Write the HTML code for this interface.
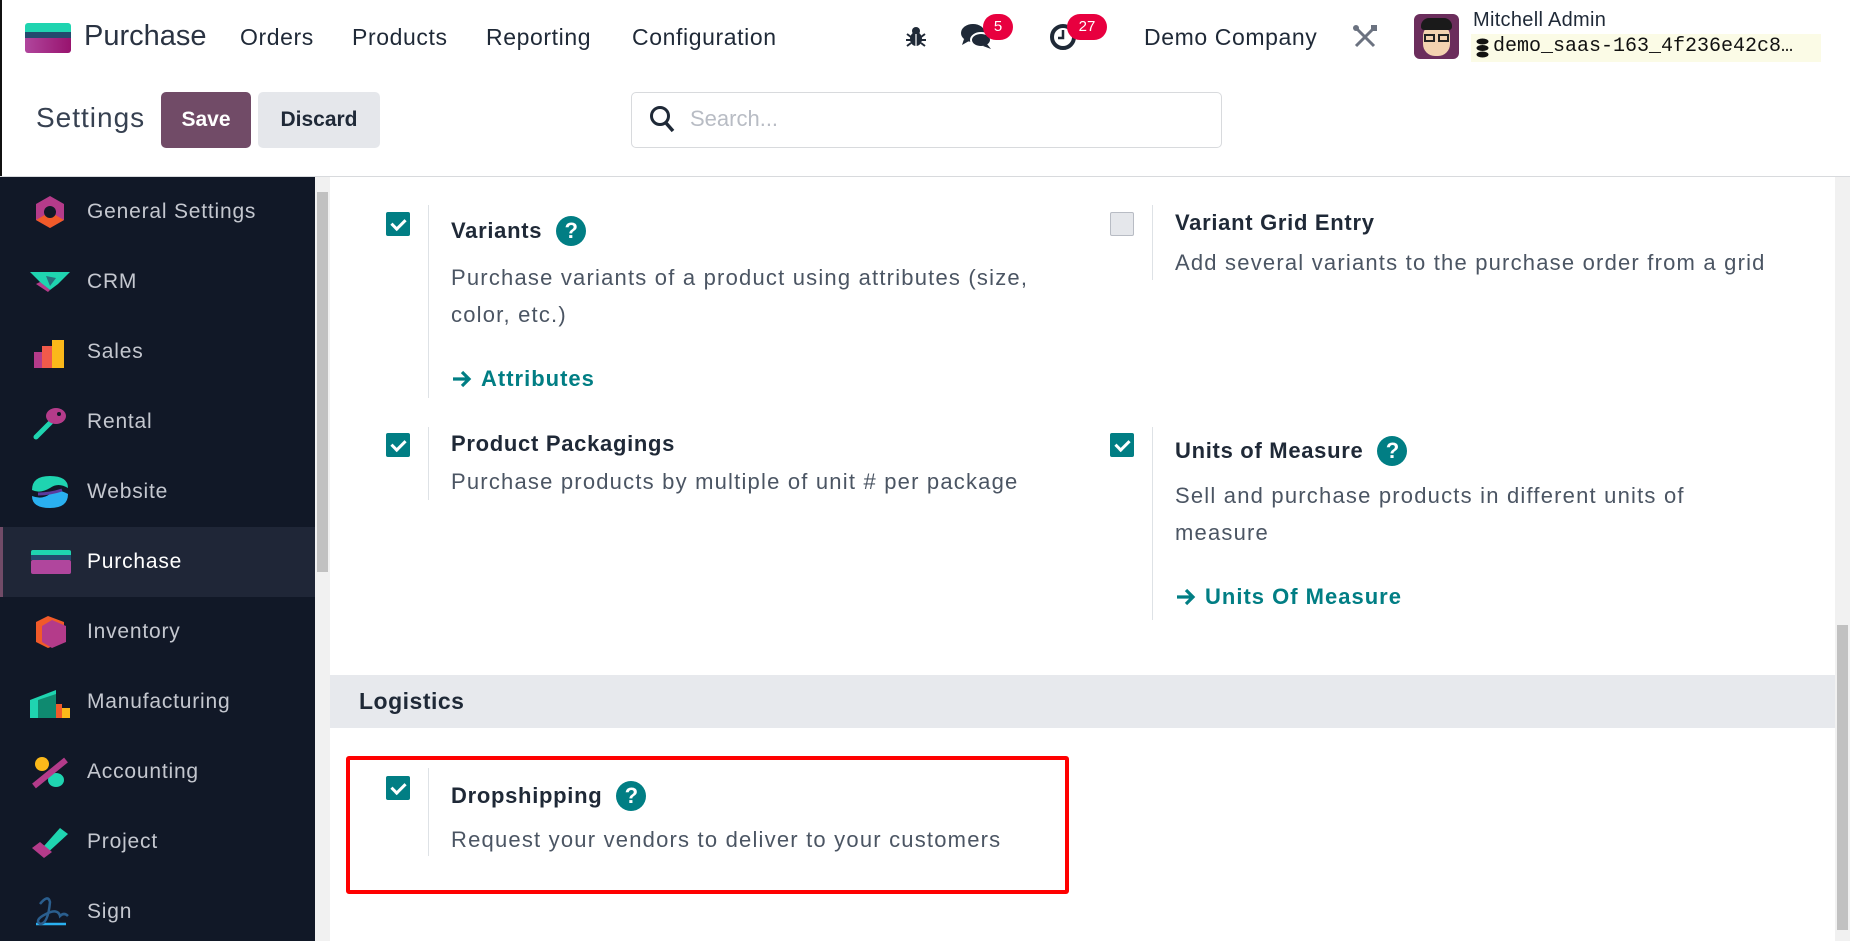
<!DOCTYPE html>
<html><head><meta charset="utf-8"><style>
*{box-sizing:border-box;margin:0;padding:0}
body{width:1850px;height:941px;overflow:hidden;background:#fff;font-family:"Liberation Sans",sans-serif;position:relative;color:#1f2937}
.abs{position:absolute}
.nav{font-size:23px;color:#1f2937;top:24px;letter-spacing:0.6px}
.side{left:0;top:177px;width:315px;height:764px;background:#111827}
.item{position:absolute;left:0;width:315px;height:70px;display:flex;align-items:center;font-size:21px;color:#c4c7cf;letter-spacing:0.8px}
.item .ic{position:absolute;left:28px;top:17px;width:44px;height:36px}
.item span{position:absolute;left:87px}
.cb{position:absolute;width:24px;height:24px;background:#017e84;border-radius:2px}
.cb::after{content:"";position:absolute;left:8px;top:4px;width:6px;height:11px;border:solid #fff;border-width:0 3px 3px 0;transform:rotate(45deg)}
.cb.off{background:#e5e7eb;border:1px solid #b8bcc4}
.cb.off::after{display:none}
.vl{position:absolute;width:1px;background:#dee2e6}
.t{position:absolute;font-size:22px;font-weight:bold;color:#1f2937;white-space:nowrap;letter-spacing:0.7px;display:flex;align-items:center}
.d{position:absolute;font-size:22px;color:#4b5563;line-height:37px;white-space:nowrap;letter-spacing:1.2px}
.lk{position:absolute;font-size:22px;font-weight:bold;color:#017e84;white-space:nowrap;letter-spacing:1px;display:flex;align-items:center}
.lk svg{margin-right:8px}
.q{display:inline-block;width:30px;height:30px;border-radius:50%;background:#017e84;color:#fff;font-size:22px;text-align:center;line-height:30px;margin-left:14px;letter-spacing:0}
.badge{position:absolute;background:#e8003f;color:#fff;border-radius:14px;font-size:15px;text-align:center;height:26px;line-height:26px}
</style></head><body>
<div class="abs" style="left:0;top:0;width:2px;height:177px;background:#111"></div>
<div class="abs" style="left:25px;top:23px;width:46px;height:30px;border-radius:3px;overflow:hidden">
 <div style="height:9px;background:#1fd4b0"></div><div style="height:6px;background:#234a6e"></div><div style="height:15px;background:linear-gradient(90deg,#b0469d,#98136e)"></div></div>
<div class="abs nav" style="left:84px;top:20px;font-size:29px;color:#2a3342;letter-spacing:0">Purchase</div>
<div class="abs nav" style="left:240px">Orders</div>
<div class="abs nav" style="left:352px">Products</div>
<div class="abs nav" style="left:486px">Reporting</div>
<div class="abs nav" style="left:632px">Configuration</div>
<svg class="abs" style="left:904px;top:25px" width="24" height="24" viewBox="0 0 24 24"><ellipse cx="12" cy="14" rx="6" ry="7" fill="#1f2937"/><circle cx="12" cy="6" r="4" fill="#1f2937"/><path d="M3 9l4 3M21 9l-4 3M2 15h5M22 15h-5M3 21l4-3M21 21l-4-3" stroke="#1f2937" stroke-width="2"/><path d="M12 9v12" stroke="#fff" stroke-width="1.2"/></svg>
<svg class="abs" style="left:960px;top:22px" width="36" height="30" viewBox="0 0 36 30"><ellipse cx="13" cy="11" rx="12" ry="9" fill="#1f2937"/><path d="M4 17l-2 6 7-4z" fill="#1f2937"/><ellipse cx="21" cy="18" rx="10" ry="7" fill="#1f2937" stroke="#fff" stroke-width="2"/><path d="M27 22l4 5-8-3z" fill="#1f2937"/></svg>
<div class="badge" style="left:983px;top:14px;width:30px">5</div>
<svg class="abs" style="left:1048px;top:22px" width="30" height="30" viewBox="0 0 30 30"><circle cx="15" cy="15" r="11" fill="none" stroke="#1f2937" stroke-width="4"/><path d="M15 8v8h-5" stroke="#1f2937" stroke-width="2.5" fill="none"/></svg>
<div class="badge" style="left:1067px;top:14px;width:40px">27</div>
<div class="abs nav" style="left:1144px">Demo Company</div>
<svg class="abs" style="left:1352px;top:24px" width="26" height="26" viewBox="0 0 26 26"><path d="M4 4l18 18M22 4L4 22" stroke="#6b7280" stroke-width="3"/><circle cx="4" cy="4" r="3" fill="#6b7280"/><rect x="19" y="1" width="6" height="6" fill="#6b7280"/></svg>
<div class="abs" style="left:1414px;top:14px;width:45px;height:45px;border-radius:6px;background:#6b2d5c;overflow:hidden">
 <div style="position:absolute;left:9px;top:10px;width:27px;height:32px;border-radius:12px;background:#f3d2b0"></div>
 <div style="position:absolute;left:7px;top:4px;width:31px;height:12px;border-radius:8px 8px 3px 3px;background:#1a1a1a"></div>
 <div style="position:absolute;left:10px;top:20px;width:11px;height:8px;border:2px solid #222"></div>
 <div style="position:absolute;left:24px;top:20px;width:11px;height:8px;border:2px solid #222"></div></div>
<div class="abs" style="left:1473px;top:9px;font-size:20px;color:#1f2937;letter-spacing:0.3px">Mitchell Admin</div>
<div class="abs" style="left:1471px;top:34px;width:350px;height:28px;background:#fbfbe6"></div>
<svg class="abs" style="left:1476px;top:38px" width="13" height="20" viewBox="0 0 13 20"><ellipse cx="6.5" cy="3.5" rx="6" ry="3" fill="#111"/><ellipse cx="6.5" cy="10" rx="6" ry="3" fill="#111"/><ellipse cx="6.5" cy="16.5" rx="6" ry="3" fill="#111"/></svg>
<div class="abs" style="left:1493px;top:35px;font-family:'Liberation Mono',monospace;font-size:20px;color:#111">demo_saas-163_4f236e42c8…</div>
<div class="abs" style="left:36px;top:102px;font-size:28px;color:#374151;letter-spacing:1px">Settings</div>
<div class="abs" style="left:161px;top:92px;width:90px;height:56px;background:#714b67;border-radius:5px;color:#fff;font-weight:bold;font-size:21px;text-align:center;line-height:56px">Save</div>
<div class="abs" style="left:258px;top:92px;width:122px;height:56px;background:#e5e7eb;border-radius:5px;color:#1f2937;font-weight:bold;font-size:21px;text-align:center;line-height:56px">Discard</div>
<div class="abs" style="left:631px;top:92px;width:591px;height:56px;border:1px solid #d8dadd;border-radius:5px"></div>
<svg class="abs" style="left:648px;top:104px" width="28" height="30" viewBox="0 0 28 30"><circle cx="12" cy="12" r="8.5" fill="none" stroke="#1f2937" stroke-width="3"/><path d="M18 19l7 8" stroke="#1f2937" stroke-width="3.5"/></svg>
<div class="abs" style="left:690px;top:106px;font-size:22px;color:#b8bcc4">Search...</div>
<div class="abs" style="left:0;top:176px;width:1850px;height:1px;background:#d8dadd"></div>
<div class="abs side">
 <div class="item" style="top:0"><svg class="ic" viewBox="0 0 44 36"><polygon points="22,2 36,10 36,26 22,34 8,26 8,10" fill="#b43b8a"/><polygon points="22,18 36,26 22,34 8,26" fill="#f15a29"/><circle cx="22" cy="18" r="6" fill="#111827"/></svg><span>General Settings</span></div>
 <div class="item" style="top:70px"><svg class="ic" viewBox="0 0 44 36"><polygon points="2,8 42,8 30,20 22,26 14,20" fill="#1fd4b0"/><polygon points="12,18 22,26 20,28 8,20" fill="#b43b8a"/><polygon points="18,12 28,14 22,22" fill="#2a6f7e"/></svg><span>CRM</span></div>
 <div class="item" style="top:140px"><svg class="ic" viewBox="0 0 44 36"><rect x="6" y="18" width="10" height="16" fill="#b43b8a"/><rect x="14" y="12" width="10" height="22" fill="#f15a4a"/><rect x="24" y="6" width="12" height="28" fill="#fbb81a"/></svg><span>Sales</span></div>
 <div class="item" style="top:210px"><svg class="ic" viewBox="0 0 44 36"><path d="M8 33l16-16" stroke="#1fd4b0" stroke-width="5" stroke-linecap="round"/><ellipse cx="28" cy="12" rx="10" ry="8" fill="#b43b8a"/><circle cx="31" cy="10" r="2" fill="#111827"/></svg><span>Rental</span></div>
 <div class="item" style="top:280px"><svg class="ic" viewBox="0 0 44 36"><path d="M4 16Q4 2 22 2Q40 2 40 14Q30 8 22 14Q12 20 4 16z" fill="#1fd4b0"/><path d="M4 22Q14 26 22 20Q30 14 40 20Q40 34 22 34Q4 34 4 22z" fill="#2ab0f0"/><path d="M10 20Q22 20 34 16" stroke="#5b3a9e" stroke-width="3" fill="none"/></svg><span>Website</span></div>
 <div class="item" style="top:350px;background:#1f2637;color:#fff;border-left:3px solid #714b67"><svg class="ic" style="left:25px" viewBox="0 0 44 36"><rect x="3" y="6" width="40" height="8" rx="2" fill="#1fd4b0"/><rect x="3" y="11" width="40" height="5" fill="#234a6e"/><rect x="3" y="16" width="40" height="14" rx="2" fill="#b0469d"/></svg><span style="left:84px">Purchase</span></div>
 <div class="item" style="top:420px"><svg class="ic" viewBox="0 0 44 36"><polygon points="20,2 36,8 36,28 20,34 8,28 8,8" fill="#f15a29"/><polygon points="24,6 38,12 38,28 24,34 14,28 14,12" fill="#b43b8a"/></svg><span>Inventory</span></div>
 <div class="item" style="top:490px"><svg class="ic" viewBox="0 0 44 36"><polygon points="2,16 28,6 28,34 2,34" fill="#1fd4b0"/><polygon points="10,16 28,10 28,34 10,34" fill="#0f8a70"/><rect x="28" y="20" width="6" height="14" fill="#f15a29"/><rect x="34" y="24" width="8" height="10" fill="#fbb81a"/></svg><span>Manufacturing</span></div>
 <div class="item" style="top:560px"><svg class="ic" viewBox="0 0 44 36"><circle cx="14" cy="10" r="7" fill="#fbb81a"/><ellipse cx="28" cy="26" rx="8" ry="7" fill="#1fd4b0"/><path d="M6 32L38 6" stroke="#b43b8a" stroke-width="6"/></svg><span>Accounting</span></div>
 <div class="item" style="top:630px"><svg class="ic" viewBox="0 0 44 36"><path d="M6 24l10 8L40 10l-8-6-16 18z" fill="#1fd4b0"/><path d="M4 24l8-6 12 10-8 6z" fill="#b43b8a"/></svg><span>Project</span></div>
 <div class="item" style="top:700px"><svg class="ic" viewBox="0 0 44 36"><path d="M8 30h30" stroke="#2ab0f0" stroke-width="2.5"/><path d="M12 10Q20 0 22 8Q20 30 12 30Q6 26 18 20Q30 14 32 22Q36 18 40 22" stroke="#2a5e8e" stroke-width="2.5" fill="none"/></svg><span>Sign</span></div>
</div>
<div class="abs" style="left:315px;top:177px;width:15px;height:764px;background:#f1f1f1"></div>
<div class="abs" style="left:317px;top:192px;width:11px;height:380px;background:#c1c1c1"></div>
<div class="abs" style="left:1835px;top:177px;width:15px;height:764px;background:#f1f1f1"></div>
<div class="abs" style="left:1837px;top:625px;width:11px;height:305px;background:#c1c1c1"></div>

<div class="cb" style="left:386px;top:212px"></div>
<div class="vl" style="left:428px;top:205px;height:193px"></div>
<div class="t" style="left:451px;top:216px">Variants<span class="q">?</span></div>
<div class="d" style="left:451px;top:259px">Purchase variants of a product using attributes (size,<br>color, etc.)</div>
<div class="lk" style="left:451px;top:366px"><svg width="22" height="20" viewBox="0 0 22 20"><path d="M2 10h16M11 3l7 7-7 7" stroke="#017e84" stroke-width="3.2" fill="none"/></svg>Attributes</div>

<div class="cb" style="left:386px;top:433px"></div>
<div class="vl" style="left:428px;top:427px;height:73px"></div>
<div class="t" style="left:451px;top:431px">Product Packagings</div>
<div class="d" style="left:451px;top:463px">Purchase products by multiple of unit # per package</div>

<div class="cb off" style="left:1110px;top:212px"></div>
<div class="vl" style="left:1152px;top:205px;height:75px"></div>
<div class="t" style="left:1175px;top:210px">Variant Grid Entry</div>
<div class="d" style="left:1175px;top:244px">Add several variants to the purchase order from a grid</div>

<div class="cb" style="left:1110px;top:433px"></div>
<div class="vl" style="left:1152px;top:427px;height:193px"></div>
<div class="t" style="left:1175px;top:436px">Units of Measure<span class="q">?</span></div>
<div class="d" style="left:1175px;top:477px">Sell and purchase products in different units of<br>measure</div>
<div class="lk" style="left:1175px;top:584px"><svg width="22" height="20" viewBox="0 0 22 20"><path d="M2 10h16M11 3l7 7-7 7" stroke="#017e84" stroke-width="3.2" fill="none"/></svg>Units Of Measure</div>

<div class="abs" style="left:330px;top:675px;width:1505px;height:53px;background:#e7e9ed"></div>
<div class="abs" style="left:359px;top:688px;font-size:23px;font-weight:bold;color:#1f2937;letter-spacing:0.5px">Logistics</div>

<div class="abs" style="left:346px;top:756px;width:723px;height:138px;border:4px solid #ff0000;border-radius:3px"></div>
<div class="cb" style="left:386px;top:776px"></div>
<div class="vl" style="left:428px;top:768px;height:88px"></div>
<div class="t" style="left:451px;top:781px">Dropshipping<span class="q">?</span></div>
<div class="d" style="left:451px;top:821px">Request your vendors to deliver to your customers</div>
</body></html>
